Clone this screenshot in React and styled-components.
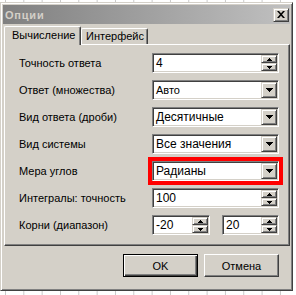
import React from "react";
import styled, { createGlobalStyle, css } from "styled-components";

const Global = createGlobalStyle`
  html, body { margin: 0; padding: 0; }
  body {
    width: 296px; height: 295px; overflow: hidden; background: #fff;
    font-family: "Liberation Sans", Arial, sans-serif;
  }
`;

const raised = css`
  box-sizing: border-box;
  background: #d4d0c8;
  border: 1px solid;
  border-color: #d4d0c8 #404040 #404040 #d4d0c8;
  box-shadow: inset 1px 1px #fff, inset -1px -1px #808080;
`;

const Desktop = styled.div`
  width: 296px; height: 295px; box-sizing: border-box; padding-top: 2px;
  background-color: #fff;
  background-image: linear-gradient(to right, #c8c8c8 1px, transparent 1px);
  background-size: 18.33px 100%;
  background-position: 5px 0;
`;

const Window = styled.div`
  width: 293px; height: 289px; box-sizing: border-box;
  background: #d4d0c8;
  border: 1px solid;
  border-color: #d4d0c8 #404040 #404040 #d4d0c8;
  box-shadow: inset 1px 1px #fff, inset -1px -1px #808080;
  padding: 2px;
  display: flex; flex-direction: column;
`;

const TitleBar = styled.div`
  height: 19px; flex: none;
  display: flex; align-items: center; justify-content: space-between;
  padding: 0 1px 0 2px;
  background: linear-gradient(to right, #808080, #c0c0c0);
  color: #d4d0c8; font-weight: bold; font-size: 11px; letter-spacing: 0.8px;
`;

const CloseButton = styled.div`
  ${raised}
  width: 16px; height: 14px;
  display: flex; align-items: center; justify-content: center;
`;

const Body = styled.div`
  flex: 1; display: flex; flex-direction: column;
  padding: 2px 0 0 1px;
`;

const TabRow = styled.div`
  height: 18px; display: flex; align-items: flex-end;
`;

const Tab = styled.div`
  box-sizing: border-box;
  position: relative;
  width: ${p => p.$w}px;
  height: ${p => (p.$active ? 19 : 16)}px;
  margin-bottom: ${p => (p.$active ? -1 : 0)}px;
  z-index: ${p => (p.$active ? 1 : 0)};
  background: #d4d0c8;
  border-top: 1px solid #fff; border-left: 1px solid #fff;
  border-right: 1px solid #404040;
  box-shadow: inset -1px 0 #808080;
  border-radius: 2px 2px 0 0;
  font-size: 11px; color: #000;
  padding-left: ${p => (p.$active ? 7 : 4)}px;
  line-height: ${p => (p.$active ? 16 : 14)}px;
`;

const Panel = styled.div`
  box-sizing: border-box; height: 202px;
  border-top: 1px solid #fff; border-left: 1px solid #fff;
  border-right: 1px solid #404040; border-bottom: 1px solid #404040;
  box-shadow: inset -1px -1px #808080;
  padding: 8px 10px 10px 14px;
  display: grid;
  grid-template-columns: 1fr 127px;
  grid-auto-rows: 20px;
  row-gap: 7px;
`;

const Label = styled.div`
  align-self: center; font-size: 11px; color: #000; white-space: nowrap;
`;

const Pair = styled.div`
  display: flex; justify-content: space-between;
`;

const Field = styled.div`
  box-sizing: border-box; height: 20px;
  width: ${p => (p.$w ? `${p.$w}px` : "100%")};
  display: flex;
  background: #fff;
  border: 1px solid; border-color: #808080 #fff #fff #808080;
  box-shadow: inset 1px 1px #404040, inset -1px -1px #d4d0c8;
  padding: 1px;
  ${p => p.$highlight && css`outline: 4px solid #f00;`}
`;

const Value = styled.div`
  flex: 1; padding-left: 2px; overflow: hidden; white-space: nowrap;
  font-size: ${p => (p.$small ? 11 : 12)}px; line-height: 16px; color: #000;
`;

const SpinCol = styled.div`
  width: 16px; display: flex; flex-direction: column;
`;

const SpinBtn = styled.div`
  ${raised}
  flex: 1; display: flex; align-items: center; justify-content: center;
`;

const DropBtn = styled.div`
  ${raised}
  width: 16px; display: flex; align-items: center; justify-content: center;
`;

const ButtonRow = styled.div`
  display: flex; justify-content: flex-end; gap: 6px;
  margin-top: 8px; padding-right: 11px;
`;

const Button = styled.div`
  box-sizing: border-box; width: 75px; height: 23px;
  display: flex; align-items: center; justify-content: center;
  background: #d4d0c8; font-size: 11px; color: #000;
  border: 1px solid;
  ${p => p.$default ? css`
    border-color: #000;
    box-shadow: inset 1px 1px #fff, inset -1px -1px #404040, inset -2px -2px #808080;
  ` : css`
    border-color: #fff #404040 #404040 #fff;
    box-shadow: inset -1px -1px #808080;
  `}
`;

const Arrow = ({ dir = "down", w = 7, h = 4 }) => (
  <svg width={w} height={h} viewBox={`0 0 ${w} ${h}`} shapeRendering="crispEdges">
    <polygon
      points={dir === "down" ? `0,0 ${w},0 ${w / 2},${h}` : `0,${h} ${w},${h} ${w / 2},0`}
      fill="#000"
    />
  </svg>
);

const Spin = ({ value, w }) => (
  <Field $w={w}>
    <Value>{value}</Value>
    <SpinCol>
      <SpinBtn><Arrow dir="up" w={5} h={3} /></SpinBtn>
      <SpinBtn><Arrow dir="down" w={5} h={3} /></SpinBtn>
    </SpinCol>
  </Field>
);

const Combo = ({ value, small, highlight }) => (
  <Field $highlight={highlight}>
    <Value $small={small}>{value}</Value>
    <DropBtn><Arrow /></DropBtn>
  </Field>
);

export default function App() {
  return (
    <>
      <Global />
      <Desktop>
        <Window>
          <TitleBar>
            <span>Опции</span>
            <CloseButton>
              <svg width="8" height="7" viewBox="0 0 8 7">
                <path d="M0 0h2l2 2.3L6 0h2L5 3.5 8 7H6L4 4.7 2 7H0l3-3.5z" fill="#000" />
              </svg>
            </CloseButton>
          </TitleBar>
          <Body>
            <TabRow>
              <Tab $active $w={77}>Вычисление</Tab>
              <Tab $w={67}>Интерфейс</Tab>
            </TabRow>
            <Panel>
              <Label>Точность ответа</Label>
              <Spin value="4" />
              <Label>Ответ (множества)</Label>
              <Combo value="Авто" small />
              <Label>Вид ответа (дроби)</Label>
              <Combo value="Десятичные" />
              <Label>Вид системы</Label>
              <Combo value="Все значения" />
              <Label>Мера углов</Label>
              <Combo value="Радианы" highlight />
              <Label>Интегралы: точность</Label>
              <Spin value="100" />
              <Label>Корни (диапазон)</Label>
              <Pair>
                <Spin value="-20" w={58} />
                <Spin value="20" w={57} />
              </Pair>
            </Panel>
            <ButtonRow>
              <Button $default>OK</Button>
              <Button>Отмена</Button>
            </ButtonRow>
          </Body>
        </Window>
      </Desktop>
    </>
  );
}
